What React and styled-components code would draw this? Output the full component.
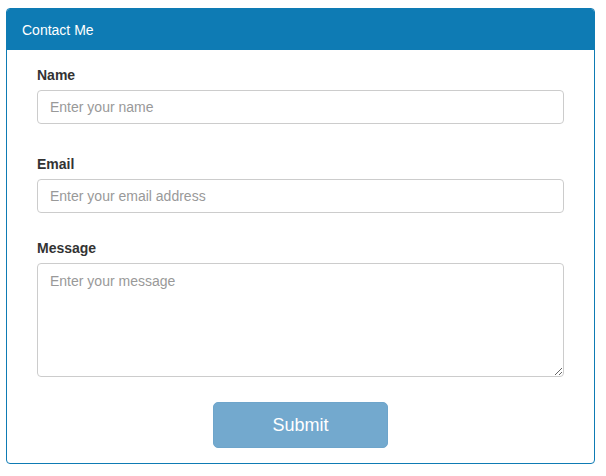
import styled, { createGlobalStyle } from "styled-components";

const GlobalStyle = createGlobalStyle`
  body {
    margin: 0;
    background: #fff;
    font-family: "Liberation Sans", Arial, sans-serif;
    color: #333;
  }
  * {
    box-sizing: border-box;
  }
`;

const Panel = styled.div`
  width: 589px;
  margin: 8px 0 0 6px;
  border: 1px solid #0e7bb4;
  border-radius: 4px;
  overflow: hidden;
  background: #fff;
`;

const PanelHeader = styled.div`
  height: 41px;
  display: flex;
  align-items: center;
  padding: 0 15px;
  background: #0e7bb4;
  color: #fff;
  font-size: 14px;
`;

const Form = styled.form`
  display: flex;
  flex-direction: column;
  padding: 15px 30px 15px;
`;

const Group = styled.div`
  display: flex;
  flex-direction: column;
  margin-bottom: ${({ gap }) => `${gap}px`};
`;

const Label = styled.label`
  font-size: 14px;
  font-weight: bold;
  line-height: 20px;
  margin-bottom: 5px;
  color: #333;
`;

const fieldStyle = `
  width: 100%;
  border: 1px solid #ccc;
  border-radius: 4px;
  padding: 6px 12px;
  font-family: "Liberation Sans", Arial, sans-serif;
  font-size: 14px;
  line-height: 20px;
  color: #555;
  background: #fff;
  outline: none;
  &::placeholder {
    color: #999;
  }
`;

const Input = styled.input`
  ${fieldStyle}
  height: 34px;
`;

const TextArea = styled.textarea`
  ${fieldStyle}
  height: 114px;
  padding-top: 7px;
  display: block;
`;

const ButtonRow = styled.div`
  display: flex;
  justify-content: center;
`;

const Submit = styled.button`
  width: 175px;
  height: 46px;
  border: 1px solid #6ea5cb;
  border-radius: 5px;
  background: #73a9ce;
  color: #fff;
  font-family: "Liberation Sans", Arial, sans-serif;
  font-size: 18px;
  cursor: pointer;
`;

const App = () => {
  return (
    <>
      <GlobalStyle />
      <Panel>
        <PanelHeader>Contact Me</PanelHeader>
        <Form onSubmit={(e) => e.preventDefault()}>
          <Group gap={30}>
            <Label htmlFor="name">Name</Label>
            <Input id="name" type="text" placeholder="Enter your name" />
          </Group>
          <Group gap={25}>
            <Label htmlFor="email">Email</Label>
            <Input id="email" type="email" placeholder="Enter your email address" />
          </Group>
          <Group gap={25}>
            <Label htmlFor="message">Message</Label>
            <TextArea id="message" placeholder="Enter your message" />
          </Group>
          <ButtonRow>
            <Submit type="submit">Submit</Submit>
          </ButtonRow>
        </Form>
      </Panel>
    </>
  );
};

export default App;
